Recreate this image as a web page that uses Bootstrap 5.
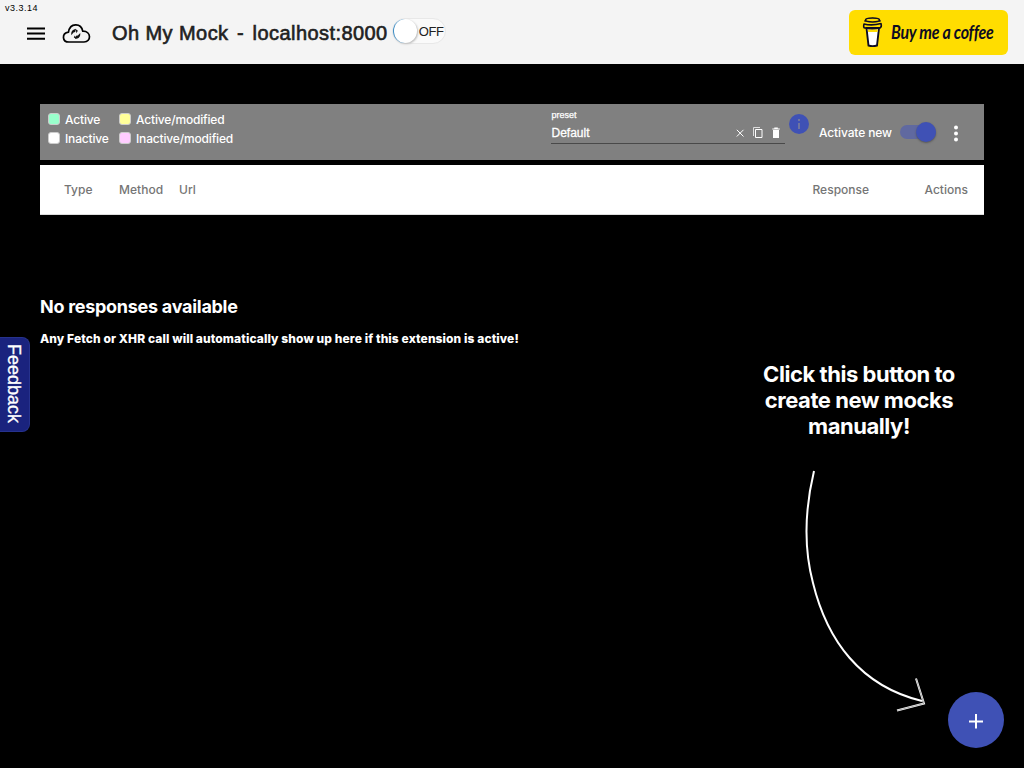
<!DOCTYPE html>
<html lang="en">
<head>
<meta charset="utf-8">
<meta name="viewport" content="width=device-width, initial-scale=1">
<title>Oh My Mock</title>
<link href="https://cdn.jsdelivr.net/npm/bootstrap@5.3.0/dist/css/bootstrap.min.css" rel="stylesheet">
<style>
body{background:#000;font-family:Inter,"Liberation Sans",sans-serif;font-size:12px;height:768px;overflow:hidden;color:#fff}
svg{display:block;flex:none}
.topbar{height:64px;background:#f4f4f4;color:#212121;font-family:"Liberation Sans",sans-serif;padding:0 16px 0 24px}
.version{left:5px;top:2px;font-size:9px;line-height:12px;color:#000;letter-spacing:.5px}
.menu-icon{margin-top:3px}
.cloud{margin:3px 0 0 12.500px;overflow:visible}
.brand-title{font-size:20px;line-height:28px;margin:2px 0 0 21.500px;-webkit-text-stroke:.6px #212121;white-space:pre;letter-spacing:.43px}
.dash{margin:0 2.500px}
.power{width:54px;height:26px;flex:none;border:1px solid #e8e8e8;border-radius:13px;background:#fafafa;margin:-2px 0 0 4.500px;font-size:13px;line-height:25px;letter-spacing:-.3px}
.power-knob{width:24px;height:24px;flex:none;border-radius:50%;background:#fff;border-left:1px solid #3c8dc5;box-shadow:1px 1px 2px #bbb;margin-right:1.500px}
.coffee{width:159px;height:45px;border-radius:6px;background:#fd0;color:#0d0c22}
.coffee-label{font:italic 700 18px/26px Lato,sans-serif;transform:scaleX(.89);transform-origin:left;margin-left:6px;white-space:nowrap;width:117px;letter-spacing:-.3px}
.workspace{padding:40px 40px 0}
.toolbar{height:56px;background:#808080}
.legend{width:204px;margin:6px 0 0 8px;line-height:19px;letter-spacing:-.17px;font-weight:500}
.legend-first{width:71px}
.legend-item{height:19px}
.swatch{width:12px;height:12px;border:1px solid #ccc;border-radius:3px;margin:-1px 5px 0 0}
.activate{margin:19px 0 0 10px;width:73px;white-space:nowrap;font-weight:500;letter-spacing:-.12px;line-height:19px}
.preset{width:234px;height:34px;border-bottom:1px solid #494949;margin:6px 0 0 299px;font-family:"Liberation Sans",sans-serif}
.preset-label{font-size:9px;line-height:10px;padding-left:.5px;-webkit-text-stroke:.25px #fff}
.preset-value{font-size:12px;line-height:26px;padding-left:.5px;-webkit-text-stroke:.3px #fff}
.track{width:36px;height:14px;border-radius:7px;background:#6069a0;margin:21px 0 0 8px}
.thumb{width:20px;height:20px;right:0;top:-3px;background:#3f51b5;box-shadow:0 1px 2px #555}
.heads{height:50px;margin-top:5px;background:#fff;border-bottom:1px solid #ddd;color:#757575;font-weight:500;letter-spacing:.02px;padding:0 16px 0 24px}
.empty-title{font-size:18px;line-height:24px;font-weight:700;margin:80px 0 11px;letter-spacing:-.28px}
.empty-note{font-size:12px;line-height:18px;font-weight:800;letter-spacing:.1px}
.feedback{left:0;top:336.500px;width:29.500px;height:95px;border:1px solid #26328d;border-left:0;border-radius:0 8px 8px 0;background:#1a237e;writing-mode:vertical-rl;font:18px/28px "Liberation Sans",sans-serif;-webkit-text-stroke:.3px #fff}
.hint{right:52px;top:361px;width:226px;font-size:22px;line-height:26px;font-weight:700;letter-spacing:-.45px}
.arrow{left:790px;top:460px}
.fab{right:20px;bottom:20px;width:56px;height:56px;background:#3f51b5}
</style>
</head>
<body class="position-relative">
<header class="topbar d-flex align-items-center position-relative">
  <span class="version position-absolute">v3.3.14</span>
  <svg class="menu-icon" width="24" height="24" viewBox="0 0 24 24"><path d="M3 5.500h18v2H3zm0 5.100h18v2H3zm0 5.200h18v2H3z" fill="#000"/></svg>
  <svg class="cloud" width="30" height="22" viewBox="0 0 30 22"><path d="M8 19C1 19 .4 10.500 7.500 9.200C9-.3 20-.3 21.800 8.200C30.500 8 30.500 19 23 19Z" fill="none" stroke="#000" stroke-width="1.700" stroke-linejoin="round"/><path d="M10.300 12.200c-.5-3 .7-5 2.700-5.600l2-.8-.8 3.300-1.700.4zM14.900 6.300l2 1.500-1.600 2.500zM19.300 10c.3 3.300-1.200 5-3 5.500l-2.300.5 1-3.300 1.800-.3zM13.800 12.400l1.300 3.400-2.300-1.400z" fill="#111"/></svg>
  <div class="brand-title">Oh My Mock <span class="dash">-</span> localhost:8000</div>
  <div class="power d-flex"><span class="power-knob"></span>OFF</div>
  <div class="coffee ms-auto d-flex align-items-center"><svg width="36" height="45" viewBox="1 0 36 45">
    <path d="M18.500 18h12.500l-2 17.500q-4.500 1.200-8.500 0z" fill="#fff" stroke="#0d0c22" stroke-width="1.900"/><path d="M19.800 19.300h10l-.3 2.700h-9.300z" fill="#fd0"/><path d="M16 14q8 2 17-.5M17 11q8-5 15 0M16 14q-1 4 1 4 7 1.500 15 0 2-1 1-4.500" fill="none" stroke="#0d0c22" stroke-width="1.600" stroke-linecap="round"/><ellipse cx="24.500" cy="10" rx="7" ry="1.900" fill="#fd0" stroke="#0d0c22" stroke-width="1.500"/></svg><div class="coffee-label">Buy me a coffee</div></div>
</header>
<main class="workspace">
  <section class="toolbar d-flex">
    <div class="legend d-flex">
      <div class="legend-first"><div class="legend-item d-flex align-items-center"><i class="swatch" style="background:#9fc"></i>Active</div><div class="legend-item d-flex align-items-center"><i class="swatch" style="background:#fff"></i>Inactive</div></div>
      <div><div class="legend-item d-flex align-items-center"><i class="swatch" style="background:#ff9"></i>Active/modified</div><div class="legend-item d-flex align-items-center"><i class="swatch" style="background:#fcf"></i>Inactive/modified</div></div>
    </div>
    <div class="preset"><div class="preset-label">preset</div><div class="preset-value d-flex align-items-center"><span class="me-auto">Default</span>
      <svg width="50" height="16" viewBox="0 0 50 16"><path d="M1.800 4.800l6.700 6.700m0-6.700l-6.700 6.700" stroke="#fff"/><path d="M18.500 11V2.500H25" fill="none" stroke="#ddd"/><path d="M20.500 4.500h6.500v8h-6.500z" fill="none" stroke="#fff"/><path d="M38 5h6v8h-6zM37.300 3.500h2v-1h3.500v1h2v1h-7.500z" fill="#fff"/></svg></div></div>
    <svg width="20" height="20" viewBox="0 0 20 20" style="margin:10px 0 0 4px"><circle cx="10" cy="10" r="10" fill="#3f51b5"/><path d="M9 5h2v2H9zm0 4h2v6H9z" fill="#6f75a0"/></svg>
    <span class="activate">Activate new</span>
    <div class="track position-relative"><span class="thumb rounded-circle position-absolute"></span></div>
    <svg width="8" height="20" viewBox="0 0 8 20" style="margin:19px 0 0 16px"><g fill="#fff"><circle cx="4" cy="4.500" r="2"/><circle cx="4" cy="10.500" r="2"/><circle cx="4" cy="16.500" r="2"/></g></svg>
  </section>
  <section class="heads d-flex align-items-center">
    <span style="width:55px">Type</span><span style="width:60px">Method</span><span class="me-auto">Url</span><span style="width:112px">Response</span><span>Actions</span>
  </section>
  <h1 class="empty-title">No responses available</h1>
  <p class="empty-note">Any Fetch or XHR call will automatically show up here if this extension is active!</p>
</main>
<button class="feedback position-absolute p-0 text-white">Feedback</button>
<div class="hint position-absolute text-center">Click this button to<br>create new mocks<br>manually!</div>
<svg class="arrow position-absolute" width="150" height="260" viewBox="0 0 150 260" fill="none" stroke="#fff"><path d="M24 11C14 53 14 89 23 123C37 180 70 226 132 241" stroke-width="2"/><path d="M126 218.500L134 243.500L107 250.500" stroke-width="2"/><path d="M126 218.500L134 243.500L107 250.500" stroke="#777" stroke-width=".6"/></svg>
<button class="fab position-absolute rounded-circle border-0 d-flex align-items-center justify-content-center p-0"><svg width="24" height="24" viewBox="0 0 24 24"><path d="M5 13.500h14M12 6v14.500" stroke="#fff" stroke-width="2"/></svg></button>
<script src="https://cdn.jsdelivr.net/npm/bootstrap@5.3.0/dist/js/bootstrap.bundle.min.js"></script>
</body>
</html>
